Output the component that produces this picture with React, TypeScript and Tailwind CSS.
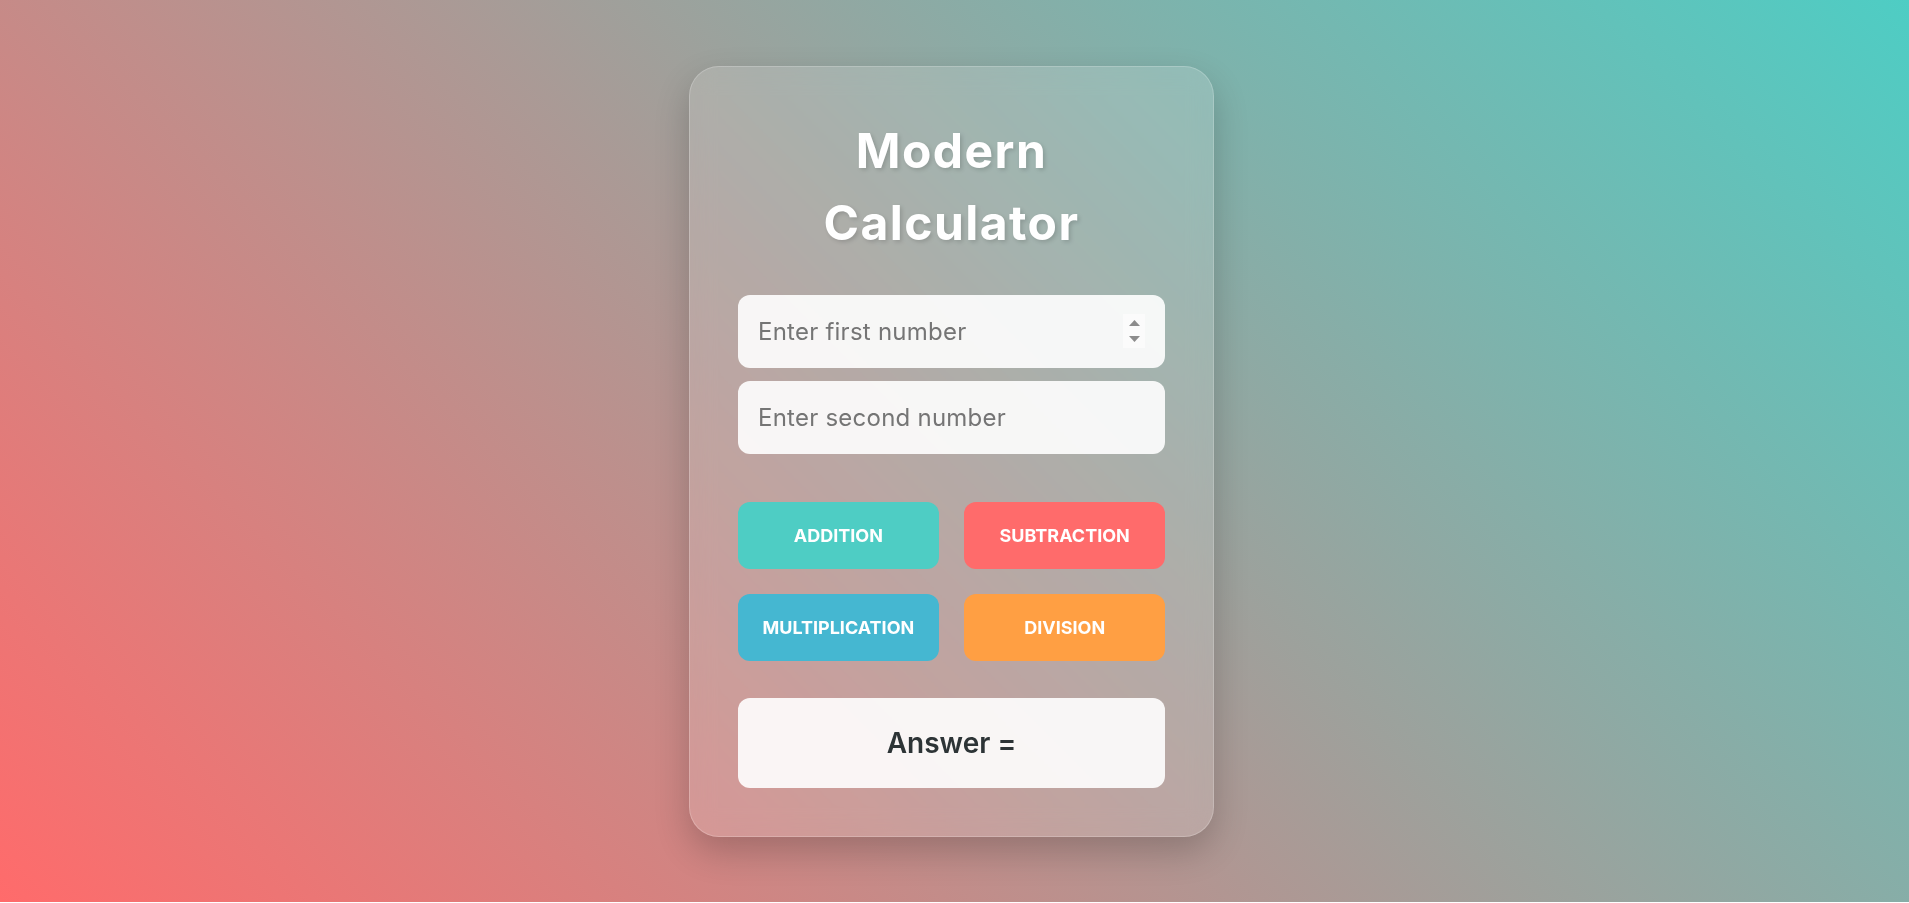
import { useState } from 'react'

const ops = [
  { label: 'ADDITION', cls: 'bg-[#4ecdc4]' },
  { label: 'SUBTRACTION', cls: 'bg-[#ff6b6b]' },
  { label: 'MULTIPLICATION', cls: 'bg-[#45b7d1]' },
  { label: 'DIVISION', cls: 'bg-[#ff9f43]' },
]

const font = 'font-["Inter","Noto_Sans",sans-serif]'

export default function App() {
  const [a, setA] = useState('')
  const [b, setB] = useState('')
  const [answer, setAnswer] = useState<string>('')

  const calc = (label: string) => {
    const x = parseFloat(a)
    const y = parseFloat(b)
    if (isNaN(x) || isNaN(y)) return
    let r = 0
    if (label === 'ADDITION') r = x + y
    if (label === 'SUBTRACTION') r = x - y
    if (label === 'MULTIPLICATION') r = x * y
    if (label === 'DIVISION') r = x / y
    setAnswer(String(r))
  }

  return (
    <div
      className={`${font} h-[902px] w-full flex items-center justify-center pr-[6px] bg-[linear-gradient(45deg,#ff6b6b,#4ecdc4)]`}
    >
      <div className="w-[525px] rounded-[30px] border border-white/20 bg-white/15 backdrop-blur-md shadow-[0_15px_35px_rgba(0,0,0,0.2)] p-12">
        {/* Title */}
        <h1 className="text-center text-[48px] leading-[72px] font-bold tracking-[0.03em] text-white [text-shadow:2px_2px_4px_rgba(0,0,0,0.15)]">
          Modern
          <br />
          Calculator
        </h1>

        {/* Inputs */}
        <div className="mt-[36px] flex flex-col gap-[13px]">
          <div className="relative">
            <input
              type="text"
              value={a}
              onChange={e => setA(e.target.value)}
              placeholder="Enter first number"
              className="w-full h-[73px] rounded-xl bg-white/90 px-5 text-[24px] tracking-[0.01em] text-[#2d3436] placeholder:text-[#757575] outline-none"
            />
            <div className="absolute right-[20px] top-[19px] w-[22px] h-[34px] bg-[#fbfbfb] flex flex-col items-center justify-between py-[6px]">
              <svg width="11" height="6" viewBox="0 0 11 6">
                <path d="M5.5 0L11 6H0z" fill="#8c8c8c" />
              </svg>
              <svg width="11" height="6" viewBox="0 0 11 6">
                <path d="M0 0h11L5.5 6z" fill="#8c8c8c" />
              </svg>
            </div>
          </div>
          <input
            type="text"
            value={b}
            onChange={e => setB(e.target.value)}
            placeholder="Enter second number"
            className="w-full h-[73px] rounded-xl bg-white/90 px-5 text-[24px] tracking-[0.01em] text-[#2d3436] placeholder:text-[#757575] outline-none"
          />
        </div>

        {/* Operation buttons */}
        <div className="mt-[48px] flex flex-wrap justify-between gap-y-[25px]">
          {ops.map(op => (
            <button
              key={op.label}
              onClick={() => calc(op.label)}
              className={`${op.cls} w-[47%] h-[67px] rounded-xl text-white text-[18px] font-bold`}
            >
              {op.label}
            </button>
          ))}
        </div>

        {/* Answer */}
        <div className="mt-[37px] h-[90px] rounded-xl bg-white/90 flex items-center justify-center">
          <span className="text-[28px] font-semibold text-[#2d3436]">
            Answer = {answer}
          </span>
        </div>
      </div>
    </div>
  )
}
